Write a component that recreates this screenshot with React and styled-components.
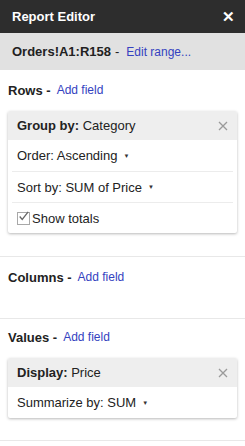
import React from "react";
import styled, { createGlobalStyle } from "styled-components";

const GlobalStyle = createGlobalStyle`
  html, body {
    margin: 0;
    padding: 0;
    background: #fff;
  }
  body {
    font-family: "Liberation Sans", Arial, sans-serif;
    font-size: 13px;
    color: #222;
  }
`;

const Panel = styled.div`
  width: 245px;
  height: 446px;
  overflow: hidden;
  background: #fff;
`;

const TitleBar = styled.div`
  height: 33px;
  background: #2d2d2d;
  display: flex;
  align-items: center;
  justify-content: space-between;
  padding: 0 10px 0 12px;
  color: #fff;
  font-weight: bold;
  font-size: 13px;
`;

const CloseX = styled.span`
  font-size: 15px;
  font-weight: bold;
  line-height: 1;
`;

const RangeBar = styled.div`
  height: 37px;
  background: #e1e1e1;
  display: flex;
  align-items: center;
  padding: 0 12px;
  font-size: 13px;
  gap: 4px;
`;

const Strong = styled.b`
  font-weight: bold;
  color: #222;
`;

const Link = styled.a`
  color: #3442c0;
  font-size: 12px;
  font-weight: normal;
  text-decoration: none;
  margin-left: 3px;
`;

const Section = styled.div`
  padding: ${(p) => p.$top || 12}px 8px 0;
  min-height: ${(p) => p.$min || 0}px;
  border-bottom: ${(p) => (p.$divider ? "1px solid #e8e8e8" : "none")};
  box-sizing: border-box;
`;

const SectionLabel = styled.div`
  display: flex;
  align-items: center;
  font-weight: bold;
  font-size: 13px;
  height: 16px;
  gap: 3px;
`;

const Card = styled.div`
  margin: 13px 0 ${(p) => p.$bottom || 22}px;
  background: #fff;
  border-radius: 2px;
  box-shadow: 0 1px 3px rgba(0, 0, 0, 0.28);
  overflow: hidden;
`;

const CardHead = styled.div`
  height: 29px;
  background: #eeeeee;
  display: flex;
  align-items: center;
  justify-content: space-between;
  padding: 0 9px 0 9px;
  font-size: 13px;
`;

const CardRow = styled.div`
  height: 31px;
  box-sizing: border-box;
  display: flex;
  align-items: center;
  margin: 0 4px;
  padding: 0 5px;
  border-top: ${(p) => (p.$line ? "1px solid #ececec" : "none")};
  font-size: 13px;
`;

const Caret = styled.span`
  font-size: 6px;
  margin-left: 6px;
  color: #333;
`;

const Check = styled.span`
  display: inline-flex;
  align-items: center;
  justify-content: center;
  width: 13px;
  height: 13px;
  border: 1px solid #a8a8a8;
  box-sizing: border-box;
  margin-right: 2px;
  background: #fff;
`;

const RemoveIcon = () => (
  <svg width="10" height="10" viewBox="0 0 10 10">
    <path d="M1 1L9 9M9 1L1 9" stroke="#9a9a9a" strokeWidth="1.3" />
  </svg>
);

const CheckMark = () => (
  <svg width="13" height="13" viewBox="0 0 13 13" style={{ marginTop: -3 }}>
    <path d="M2 6.5L5 10L12 1" stroke="#666" strokeWidth="1.5" fill="none" />
  </svg>
);

const App = () => {
  return (
    <Panel>
      <GlobalStyle />
      <TitleBar>
        <span>Report Editor</span>
        <CloseX>✕</CloseX>
      </TitleBar>
      <RangeBar>
        <Strong>Orders!A1:R158</Strong> -<Link>Edit range...</Link>
      </RangeBar>

      <Section $divider>
        <SectionLabel>
          Rows - <Link>Add field</Link>
        </SectionLabel>
        <Card $bottom={23}>
          <CardHead>
            <span>
              <Strong>Group by:</Strong> Category
            </span>
            <RemoveIcon />
          </CardHead>
          <CardRow>
            Order: Ascending<Caret>▼</Caret>
          </CardRow>
          <CardRow $line>
            Sort by: SUM of Price<Caret>▼</Caret>
          </CardRow>
          <CardRow $line>
            <Check>
              <CheckMark />
            </Check>
            Show totals
          </CardRow>
        </Card>
      </Section>

      <Section $divider $min={62}>
        <SectionLabel>
          Columns - <Link>Add field</Link>
        </SectionLabel>
      </Section>

      <Section $divider $top={10}>
        <SectionLabel>
          Values - <Link>Add field</Link>
        </SectionLabel>
        <Card $bottom={22}>
          <CardHead>
            <span>
              <Strong>Display:</Strong> Price
            </span>
            <RemoveIcon />
          </CardHead>
          <CardRow>
            Summarize by: SUM<Caret>▼</Caret>
          </CardRow>
        </Card>
      </Section>
    </Panel>
  );
};

export default App;
